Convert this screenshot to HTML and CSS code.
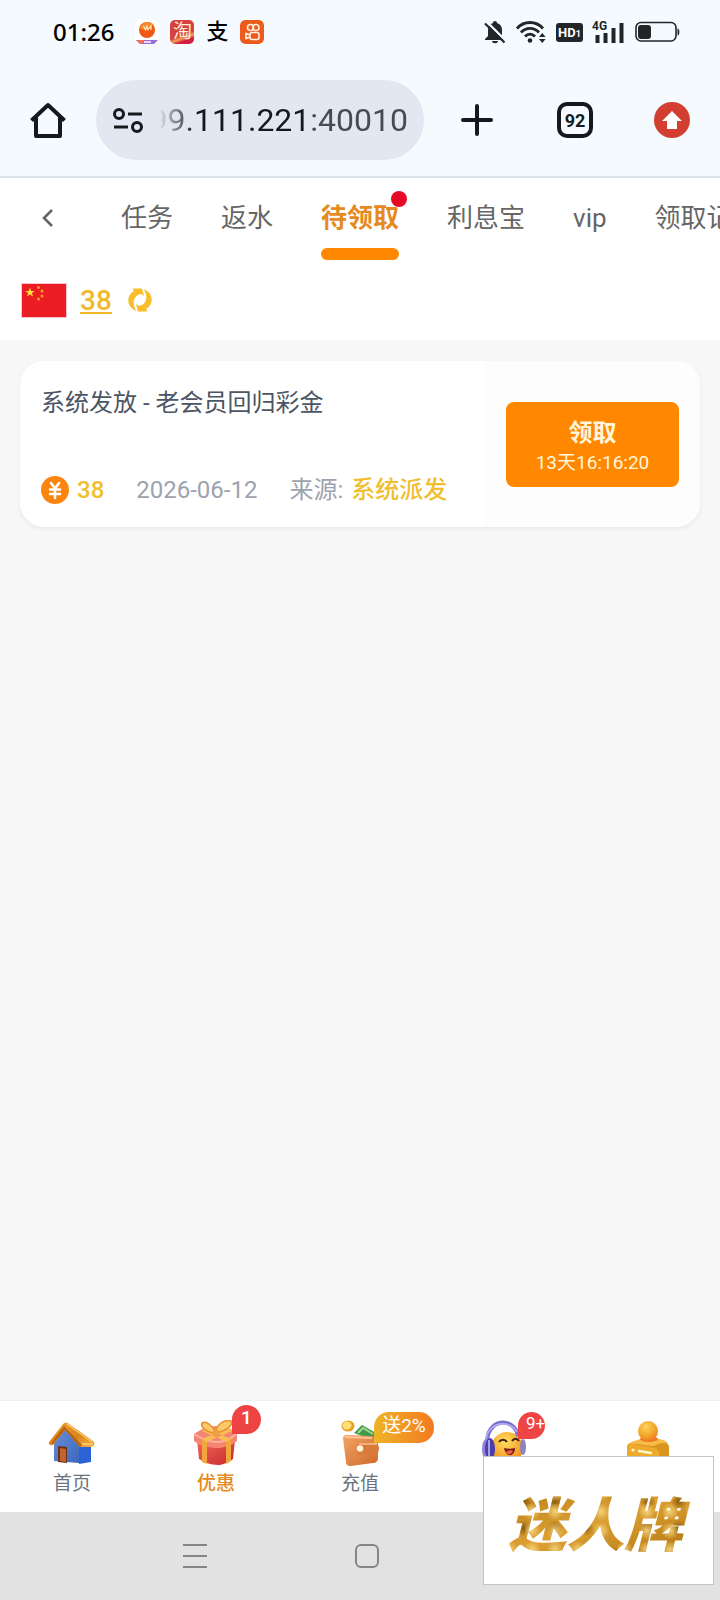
FILE: index.html
```
<!DOCTYPE html>
<html lang="zh-CN">
<head>
    <meta charset="utf-8">
    <meta name="viewport" content="width=device-width, initial-scale=1">
    <title>待领取</title>
    <link rel="stylesheet" href="styles.css">
</head>
<body>
    <div class="status-bar">
        <div class="status-left">
            <span class="clock">01:26</span>
            <svg class="app" viewBox="0 0 24 24">
                <rect width="24" height="24" rx="5" fill="#fff"/>
                <circle cx="12" cy="10" r="8" fill="#ee5a16"/>
                <path d="M5 9a8 8 0 0 1 13-5c-3 5-7 6-13 5z" fill="#f98a2c"/>
                <path d="M8.500 6l2 4 1.500-4 1 4 3-4v4" fill="none" stroke="#ffe9b8" stroke-width="1.200"/>
                <path d="M1 20h22l-4 4H5z" fill="#9a6be0"/>
                <path d="M1 20h9l-3 4H5z" fill="#f0705e"/>
                <path d="M9 22h7" stroke="#fff" stroke-width="1.400"/>
            </svg>
            <span class="app app-tao">淘</span>
            <span class="app app-pay">支</span>
            <svg class="app" viewBox="0 0 24 24">
                <rect width="24" height="24" rx="5" fill="#ec5a1c"/>
                <g fill="none" stroke="#fff0e0" stroke-width="1.600">
                    <circle cx="10.500" cy="7.500" r="3"/>
                    <circle cx="16" cy="7.500" r="3"/>
                    <rect x="10" y="12.500" width="9" height="7" rx="2"/>
                    <path d="M10 15l-4-1.500v5L10 17"/>
                </g>
            </svg>
        </div>
        <div class="status-right">
            <svg width="22" height="24" viewBox="0 0 22 24">
                <path d="M11 1c1.200 0 2 .8 2 2 3 1 5 3.500 5 7v6l3 3v1H1v-1l3-3v-6c0-3.500 2-6 5-7 0-1.200.8-2 2-2z" fill="#222629"/>
                <path d="M8 21h6c0 3-6 3-6 0z" fill="#222629"/>
                <path d="M3 2l19 19" stroke="#f5faff" stroke-width="2.400"/>
                <path d="M1 3.500l19.500 19" stroke="#222629" stroke-width="2.200"/>
            </svg>
            <svg width="30" height="24" viewBox="0 0 30 24">
                <g fill="none" stroke="#222629" stroke-width="2.800">
                    <path d="M1 8.500C8 .5 20 .5 27 8.500"/>
                    <path d="M5 12.500c5-5.500 13-5.500 18 0"/>
                    <path d="M9 16.500c3-3.300 7-3.300 10 0"/>
                </g>
                <circle cx="14" cy="20.500" r="2.300" fill="#222629"/>
                <path d="M23 17l3.300-4 3.300 4zM23 19l3.300 4 3.300-4z" fill="#222629"/>
            </svg>
            <span class="hd">HD<small>1</small></span>
            <span class="signal">
                <small>4G</small>
                <svg width="32" height="24" viewBox="0 0 32 24">
                    <path d="M4.500 23v-8M12.500 23V13M20.500 23V8M28.500 23V3" stroke="#222629" stroke-width="4"/>
                </svg>
            </span>
            <svg width="45" height="22" viewBox="0 0 45 22">
                <rect x="1" y="1.500" width="40" height="18.500" rx="5" fill="none" stroke="#222629" stroke-width="1.600"/>
                <rect x="3" y="4" width="13" height="14" rx="3" fill="#222629"/>
                <path d="M42.500 7.500c2.500 0 2.500 7 0 7z" fill="#222629"/>
            </svg>
        </div>
    </div>

    <div class="browser-bar">
        <button class="tool" aria-label="home">
            <svg width="36" height="36" viewBox="0 0 36 36">
                <path d="M1.500 18.500L18 3l16.500 15.500M6 15v19h24V15" fill="none" stroke="#15191d" stroke-width="4" stroke-linejoin="round"/>
            </svg>
        </button>
        <label class="address">
            <svg width="30" height="26" viewBox="0 0 30 26">
                <g fill="none" stroke="#15191d" stroke-width="3">
                    <circle cx="6" cy="7" r="4.500"/>
                    <path d="M15 7h14M1 20h14"/>
                    <circle cx="24" cy="20" r="4.500"/>
                </g>
            </svg>
            <span class="url-clip">
                <input class="url" type="text" value="99.111.221:40010" aria-label="url">
            </span>
        </label>
        <div class="tools">
            <button class="tool" aria-label="new tab">
                <svg width="36" height="36" viewBox="0 0 36 36">
                    <path d="M17 4v28M3 18h28" stroke="#15191d" stroke-width="4" stroke-linecap="round"/>
                </svg>
            </button>
            <button class="tool tab-count">92</button>
            <button class="tool" aria-label="update">
                <svg width="36" height="36" viewBox="0 0 36 36">
                    <circle cx="18" cy="18" r="18" fill="#d23f31"/>
                    <path d="M18 9l10 10h-5v8H13v-8H8z" fill="#fff"/>
                </svg>
            </button>
        </div>
    </div>

    <header class="top">
        <nav class="tabs">
            <button class="back" aria-label="back">
                <svg width="12" height="20" viewBox="0 0 12 20">
                    <path d="M10 2l-8 8 8 8" fill="none" stroke="#666" stroke-width="2.600"/>
                </svg>
            </button>
            <a class="tab" href="#">任务</a>
            <a class="tab" href="#">返水</a>
            <a class="tab active" href="#">待领取<i class="dot"></i></a>
            <a class="tab" href="#">利息宝</a>
            <a class="tab" href="#">vip</a>
            <a class="tab" href="#">领取记录</a>
        </nav>
        <div class="balance">
            <svg class="flag" viewBox="0 0 46 35">
                <rect x="0" y="0" width="46" height="35" fill="#fbc4c8"/>
                <rect x="1" y="1" width="44" height="33" fill="#ec1c24"/>
                <path d="M9 4.500l1.200 3.400h3.600l-2.900 2.200 1.100 3.500L9 11.500l-3 2.100 1.100-3.500-2.900-2.200h3.600z" fill="#ffe02e"/>
                <g fill="#f7a01f">
                    <circle cx="17.500" cy="4.500" r="1.500"/>
                    <circle cx="21" cy="8" r="1.500"/>
                    <circle cx="21" cy="13" r="1.500"/>
                    <circle cx="17.500" cy="16" r="1.500"/>
                </g>
            </svg>
            <a class="amount" href="#">38</a>
            <button class="refresh" aria-label="refresh">
                <svg width="24" height="26" viewBox="0 0 24 26">
                    <g fill="#f8bd28">
                        <path d="M8.500 24C-2 20-2 8 6 4L4.500 1.500H14l2 7.500-3-2C6 8 3 16 8.500 24z"/>
                        <path d="M15.500 2C26 6 26 18 18 22l1.500 2.500H10L8 17l3 2c7-1 10-9 4.500-17z"/>
                    </g>
                </svg>
            </button>
        </div>
    </header>

    <main class="list">
        <article class="card">
            <div class="info">
                <h2 class="title">系统发放 - 老会员回归彩金</h2>
                <div class="meta">
                    <span class="prize">
                        <svg width="28" height="28" viewBox="0 0 28 28">
                            <circle cx="14" cy="14" r="14" fill="#fb860f"/>
                            <path d="M10 7l4 5.500L18 7M14 13v9M9 13.500h10M9 18h10" fill="none" stroke="#fff" stroke-width="2.500" stroke-linecap="round"/>
                        </svg>
                        <b>38</b>
                    </span>
                    <time>2026-06-12</time>
                    <span class="source">来源: <b>系统派发</b></span>
                </div>
            </div>
            <div class="action">
                <button class="claim">
                    <b>领取</b>
                    <span>13天16:16:20</span>
                </button>
            </div>
        </article>
    </main>

    <nav class="bottom-nav">
        <a class="item" href="#">
            <span class="pic">
                <svg width="48" height="48" viewBox="0 0 48 48">
                    <defs>
                        <linearGradient id="wall" x1="0" y1="0" x2="1" y2="1">
                            <stop offset="0" stop-color="#6a8fd8"/>
                            <stop offset="1" stop-color="#3a68bf"/>
                        </linearGradient>
                        <linearGradient id="roof" x1="0" y1="0" x2="1" y2="1">
                            <stop offset="0" stop-color="#f0a23e"/>
                            <stop offset=".6" stop-color="#d9841c"/>
                            <stop offset="1" stop-color="#f9b24a"/>
                        </linearGradient>
                    </defs>
                    <path d="M6 22L17 9l14 15v19L6 41z" fill="url(#wall)"/>
                    <path d="M31 26l12 1v15l-12 2z" fill="#2c63d6"/>
                    <path d="M10 26l9 1v16l-9-1z" fill="#6e3016"/>
                    <path d="M12 28l6 1v13l-6-1z" fill="#c0642c"/>
                    <path d="M15 4c2-2 4-2 6 0l24 17c3 3 1 6-3 6H32L17 10 5 25c-3 1-5-1-4-3z" fill="url(#roof)"/>
                    <path d="M16 6L3 23l2 1L17 10l15 17 2-2z" fill="#b9660f"/>
                    <path d="M19 4l25 18" stroke="#ffc766" stroke-width="1.500"/>
                    <path d="M35 24h9" stroke="#ffc766" stroke-width="2" stroke-linecap="round"/>
                </svg>
            </span>
            <span class="label">首页</span>
        </a>
        <a class="item current" href="#">
            <span class="pic">
                <svg width="48" height="48" viewBox="0 0 48 48">
                    <defs>
                        <linearGradient id="box" x1="0" y1="0" x2="1" y2="1">
                            <stop offset="0" stop-color="#ee6a5c"/>
                            <stop offset="1" stop-color="#c8282c"/>
                        </linearGradient>
                    </defs>
                    <path d="M5 20h38l-2 19c-5 4-12 6-15 6-7 0-14-3-19-6z" fill="url(#box)"/>
                    <path d="M2 14C9 9 17 6 25 6s15 3 20 7v8c-6 5-13 7-20 7S8 26 2 21z" fill="#f58573"/>
                    <path d="M2 14c9 6 15 8 23 8s14-3 20-9" fill="none" stroke="#ffb09d" stroke-width="2"/>
                    <path d="M10 19l5 2v23l-5-2zM34 21l5-3v23l-5 3z" fill="#f2a63d"/>
                    <path d="M10 19L36 8l4 3-26 11zM39 19L14 8l-4 3 25 11z" fill="#f9bf55"/>
                    <path d="M24 13C16 13 8 8 10 3c4-3 11 3 14 10zM24 13c0-8 7-14 15-12 3 5-6 10-15 12z" fill="#fbc968" stroke="#e78f32" stroke-width="1.500"/>
                    <circle cx="24" cy="13" r="3.500" fill="#f0a03c"/>
                </svg>
                <em class="badge badge-one">1</em>
            </span>
            <span class="label">优惠</span>
        </a>
        <a class="item" href="#">
            <span class="pic">
                <svg width="48" height="48" viewBox="0 0 48 48">
                    <defs>
                        <linearGradient id="wallet" x1="0" y1="0" x2="1" y2="1">
                            <stop offset="0" stop-color="#f2a468"/>
                            <stop offset="1" stop-color="#cf6a2a"/>
                        </linearGradient>
                    </defs>
                    <path d="M18 13l8-8 14 8 2 9z" fill="#3f9a4c"/>
                    <path d="M22 13l5-5 10 6" fill="none" stroke="#a4d88c" stroke-width="2"/>
                    <ellipse cx="12" cy="6" rx="6.500" ry="5.500" fill="#e8a21f"/>
                    <ellipse cx="11" cy="5.500" rx="4.500" ry="4" fill="#ffdf78"/>
                    <path d="M7 18c0-2 2-3 4-3l25 1c4 1 6 3 6 6v16c0 3-2 5-5 5l-22 3c-4 0-5-2-5-4z" fill="url(#wallet)"/>
                    <path d="M9 17l27 1" stroke="#ffc594" stroke-width="2"/>
                    <rect x="20" y="23" width="23" height="11" rx="5" fill="#d9793a"/>
                    <path d="M23 24h18" stroke="#f4b07c" stroke-width="2"/>
                    <circle cx="24" cy="28.500" r="3.300" fill="#fff1dc"/>
                </svg>
                <em class="badge badge-gift">送2%</em>
            </span>
            <span class="label">充值</span>
        </a>
        <a class="item" href="#" aria-label="客服">
            <span class="pic">
                <svg width="48" height="48" viewBox="0 0 48 48">
                    <defs>
                        <radialGradient id="face" cx=".45" cy=".3" r=".7">
                            <stop offset="0" stop-color="#ffdf5e"/>
                            <stop offset="1" stop-color="#f2891d"/>
                        </radialGradient>
                    </defs>
                    <circle cx="27" cy="28" r="16" fill="url(#face)"/>
                    <path d="M7 24C6 -2 34-4 38 16" fill="none" stroke="#7a70cf" stroke-width="4"/>
                    <path d="M6 20C8 1 30-1 37 12" fill="none" stroke="#b5aff3" stroke-width="1.500"/>
                    <ellipse cx="6" cy="29" rx="4" ry="10" fill="#8e84dc"/>
                    <ellipse cx="10" cy="29" rx="5" ry="11" fill="#4b3fb0"/>
                    <path d="M9 20v18" stroke="#c9c4f4" stroke-width="1.500"/>
                    <ellipse cx="43" cy="27" rx="3" ry="8" fill="#8c84bd"/>
                    <path d="M19 22c2-3 6-3 8 0M32 21c2-3 5-3 7 0" fill="none" stroke="#40200e" stroke-width="2"/>
                    <path d="M24 28c4 1 7 1 11 0 0 9-9 10-11 0z" fill="#7a1d16"/>
                    <path d="M26 32c3-2 5-2 7-1-2 4-5 4-7 1z" fill="#ef6152"/>
                </svg>
                <em class="badge badge-more">9+</em>
            </span>
        </a>
        <a class="item" href="#" aria-label="我的">
            <span class="pic">
                <svg width="48" height="48" viewBox="0 0 48 48">
                    <defs>
                        <radialGradient id="head" cx=".4" cy=".3" r=".8">
                            <stop offset="0" stop-color="#ffd25e"/>
                            <stop offset=".6" stop-color="#f0a327"/>
                            <stop offset="1" stop-color="#f26a1c"/>
                        </radialGradient>
                    </defs>
                    <path d="M3 27c0-4 4-5 18-8 10-1 24 2 24 8v17H3z" fill="#d9951f"/>
                    <path d="M5 24c4-3 12-6 20-6 9 0 17 2 19 5-8 0-11 1-14 3-8 0-18-3-25-2z" fill="#f7bb48"/>
                    <ellipse cx="25" cy="19" rx="9" ry="3" fill="#f07a24"/>
                    <circle cx="24" cy="11" r="10" fill="url(#head)"/>
                    <path d="M3 29c0-4 2-6 6-5l22 4c3 1 4 3 4 6v12H3z" fill="#eeaa2c"/>
                    <path d="M15 31l12 2" stroke="#fff6c8" stroke-width="2.500" stroke-linecap="round"/>
                    <circle cx="9" cy="30" r="1.600" fill="#fff6c8"/>
                </svg>
            </span>
        </a>
    </nav>

    <div class="system-nav">
        <button class="key" aria-label="recent">
            <svg width="24" height="24" viewBox="0 0 24 24"><path d="M0 1h24M0 12h24M0 23h24" stroke="#868686" stroke-width="2"/></svg>
        </button>
        <button class="key" aria-label="desktop">
            <svg width="24" height="24" viewBox="0 0 24 24"><rect x="1" y="1" width="22" height="22" rx="5" fill="none" stroke="#868686" stroke-width="2"/></svg>
        </button>
        <button class="key" aria-label="return">
            <svg width="24" height="24" viewBox="0 0 24 24"><path d="M17 2L6 12l11 10" fill="none" stroke="#868686" stroke-width="2"/></svg>
        </button>
    </div>

    <div class="brand"><span>迷人牌</span></div>
</body>
</html>
```
FILE: styles.css
```
* {
    box-sizing: border-box;
}
body {
    margin: 0;
    min-height: 100vh;
    display: flex;
    flex-direction: column;
    position: relative;
    overflow-x: hidden;
    background: #f7f7f7;
    font-family: Roboto, "Noto Sans CJK SC", sans-serif;
    color: #666;
}
button {
    padding: 0;
    border: 0;
    background: none;
    font-family: inherit;
    color: inherit;
}
a {
    color: inherit;
    text-decoration: none;
}
svg {
    display: block;
    flex: none;
}

/* phone status bar */
.status-bar {
    display: flex;
    justify-content: space-between;
    align-items: center;
    height: 64px;
    padding: 0 40px 0 53px;
    background: #f5faff;
    color: #222629;
}
.status-left, .status-right {
    display: flex;
    align-items: center;
    gap: 11px;
}
.status-right {
    gap: 10px;
}
.clock {
    margin-right: 10px;
    font-family: "Noto Sans", sans-serif;
    font-size: 24px;
    line-height: 32px;
    font-weight: 500;
    color: #000;
}
.app {
    width: 24px;
    height: 24px;
    border-radius: 5px;
    text-align: center;
    line-height: 24px;
}
.app-tao {
    background: linear-gradient(160deg, #d8413f 60%, #f5a25e 70%, #d31f3a 80%);
    color: #fff0d8;
    font-size: 19px;
}
.app-pay {
    color: #000;
    font-size: 22px;
    font-weight: 500;
}
.hd {
    width: 27px;
    height: 19px;
    border-radius: 3px;
    background: #222629;
    color: #fff;
    font-size: 13px;
    font-weight: bold;
    line-height: 19px;
    text-align: center;
}
.hd small {
    font-size: 9px;
}
.signal {
    position: relative;
}
.signal small {
    position: absolute;
    left: -1px;
    top: 0;
    background: #f5faff;
    font-size: 12px;
    line-height: 12px;
    font-weight: bold;
}

/* browser toolbar */
.browser-bar {
    display: flex;
    align-items: center;
    padding: 16px 30px;
    border-bottom: 2px solid #dbe2e8;
    background: #f5faff;
}
.tool {
    width: 36px;
    height: 36px;
    flex: none;
}
.address {
    display: flex;
    align-items: center;
    flex: 1;
    min-width: 0;
    gap: 18px;
    height: 80px;
    margin: 0 36px 0 30px;
    padding: 0 16px 0 17px;
    border-radius: 40px;
    background: #e2e8f1;
}
/* long addresses keep their end in view */
.url-clip {
    display: flex;
    justify-content: flex-end;
    flex: 1;
    min-width: 0;
    overflow: hidden;
}
.url {
    flex: none;
    width: 264px;
    padding: 0;
    border: 0;
    outline: 0;
    text-align: right;
    font: 32px Roboto, sans-serif;
    color: transparent;
    background: linear-gradient(90deg, #e2e8f1 14px, #15191d 52px, #15191d 158px, #464b51 168px);
    -webkit-background-clip: text;
    background-clip: text;
}
.tools {
    display: flex;
    gap: 61px;
}
.tab-count {
    border: 4px solid #15191d;
    border-radius: 10px;
    color: #15191d;
    font-size: 18px;
    font-weight: bold;
}

/* tabs + balance */
.top {
    background: #fff;
}
.tabs {
    display: flex;
    gap: 48px;
    height: 82px;
    padding-left: 42px;
    overflow: hidden;
}
.back {
    flex: none;
    width: 31px;
    height: 80px;
}
.tab {
    flex: none;
    position: relative;
    padding-top: 20px;
    font-size: 26px;
    line-height: 40px;
    white-space: nowrap;
}
.tab.active {
    color: #e68a1e;
    font-weight: bold;
}
.tab.active::after {
    content: "";
    display: block;
    height: 12px;
    margin-top: 10px;
    border-radius: 6px;
    background: #ff8800;
}
.dot {
    position: absolute;
    right: -8px;
    top: 13px;
    width: 16px;
    height: 16px;
    border-radius: 50%;
    background: #e60a26;
}
.balance {
    display: flex;
    align-items: center;
    gap: 13px;
    height: 80px;
    padding-left: 21px;
}
.flag {
    width: 46px;
    height: 35px;
}
.amount {
    color: #f0b92c;
    font-size: 28px;
    font-weight: 500;
    text-decoration: underline;
    text-decoration-thickness: 2px;
    text-underline-offset: 2px;
}
.refresh {
    margin-left: 3px;
}

/* reward list */
.list {
    flex: 1;
    padding: 21px 20px;
}
.card {
    display: flex;
    height: 166px;
    border-radius: 24px;
    overflow: hidden;
    background: #fff;
    box-shadow: 0 2px 4px rgba(0, 0, 0, .06);
}
.info {
    flex: 1;
    display: flex;
    flex-direction: column;
    justify-content: space-between;
    padding: 24px 20px 19px 21px;
}
.title {
    margin: 0;
    color: #4b5563;
    font-size: 24px;
    line-height: 36px;
    font-weight: normal;
}
.meta {
    display: flex;
    align-items: center;
    gap: 32px;
    color: #9ca3af;
    font-size: 24px;
    line-height: 36px;
    white-space: nowrap;
}
.meta b {
    color: #f0be2e;
    font-weight: 500;
}
.prize {
    display: flex;
    align-items: center;
    gap: 8px;
}
.source b {
    margin-left: 2px;
}
.action {
    display: flex;
    align-items: center;
    padding: 0 21px 0 20px;
    background: #fdfdfd;
}
.claim {
    display: flex;
    flex-direction: column;
    align-items: center;
    justify-content: center;
    width: 173px;
    height: 85px;
    padding-top: 6px;
    border-radius: 8px;
    background: #ff8800;
    color: #fff6dc;
}
.claim b {
    font-size: 24px;
    line-height: 32px;
}
.claim span {
    font-size: 19px;
    line-height: 28px;
}

/* bottom navigation */
.bottom-nav {
    display: grid;
    grid-template-columns: repeat(5, 1fr);
    height: 112px;
    border-top: 1px solid #f0f0f0;
    background: #fff;
}
.item {
    display: flex;
    flex-direction: column;
    align-items: center;
    padding-top: 19px;
    color: #6b7280;
    font-size: 19px;
    line-height: 28px;
}
.item.current {
    color: #e68a1e;
    font-weight: 500;
}
.pic {
    position: relative;
    margin-bottom: 2px;
}
.badge {
    position: absolute;
    border-radius: 15px 15px 15px 0;
    background: #ef4444;
    color: #fff;
    font-style: normal;
    font-weight: normal;
    text-align: center;
    white-space: nowrap;
}
.badge-one {
    left: 40px;
    top: -15px;
    width: 29px;
    height: 29px;
    font-size: 19px;
    line-height: 26px;
    font-weight: 500;
}
.badge-gift {
    left: 38px;
    top: -8px;
    width: 60px;
    height: 31px;
    background: linear-gradient(90deg, #efb426, #f37a22);
    font-size: 19px;
    line-height: 28px;
}
.badge-more {
    left: 38px;
    top: -8px;
    width: 27px;
    height: 27px;
    padding-left: 8px;
    overflow: hidden;
    font-size: 17px;
    line-height: 23px;
}

/* android keys */
.system-nav {
    display: flex;
    justify-content: center;
    align-items: center;
    gap: 148px;
    height: 88px;
    padding-left: 14px;
    background: #e2e2e2;
}

/* floating brand plate */
.brand {
    position: absolute;
    right: 6px;
    bottom: 15px;
    display: flex;
    align-items: center;
    justify-content: center;
    width: 231px;
    height: 129px;
    border: 1px solid #c4c4c4;
    background: #fff;
}
.brand span {
    padding: 0 12px 0 6px;
    font: italic 900 58px "Noto Sans CJK SC", sans-serif;
    line-height: 72px;
    color: transparent;
    background:
        radial-gradient(circle at 30% 40%, #f3d27a 0, rgba(200, 140, 30, 0) 9px) 0 0 / 23px 19px,
        radial-gradient(circle at 70% 60%, #8a5a10 0, rgba(150, 95, 15, 0) 8px) 0 0 / 31px 27px,
        linear-gradient(160deg, #b57a14, #dca032 50%, #b0720f);
    -webkit-background-clip: text;
    background-clip: text;
}
```
